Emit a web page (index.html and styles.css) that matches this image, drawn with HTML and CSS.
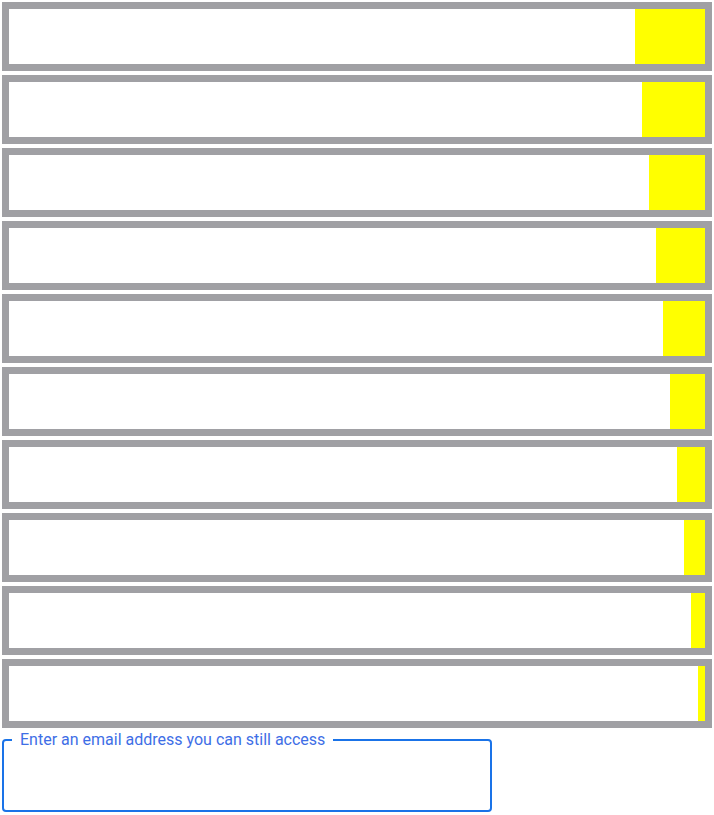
FILE: index.html
```html
<!DOCTYPE html>
<html lang="en">

<head>
    <meta charset="UTF-8">
    <meta name="viewport" content="width=device-width, initial-scale=1.0">
    <title>Recovery</title>
    <link rel="stylesheet" href="styles.css">
</head>

<body>

    <div class="bars">
        <div class="bar"><div class="fill" style="width: 10%"></div></div>
        <div class="bar"><div class="fill" style="width: 9%"></div></div>
        <div class="bar"><div class="fill" style="width: 8%"></div></div>
        <div class="bar"><div class="fill" style="width: 7%"></div></div>
        <div class="bar"><div class="fill" style="width: 6%"></div></div>
        <div class="bar"><div class="fill" style="width: 5%"></div></div>
        <div class="bar"><div class="fill" style="width: 4%"></div></div>
        <div class="bar"><div class="fill" style="width: 3%"></div></div>
        <div class="bar"><div class="fill" style="width: 2%"></div></div>
        <div class="bar"><div class="fill" style="width: 1%"></div></div>
    </div>

    <fieldset class="email-box">
        <legend>Enter an email address you can still access</legend>
        <div class="email-field"></div>
    </fieldset>

</body>

</html>
```

FILE: styles.css
```css
body {
    margin: 0;
    font-family: Roboto, "Noto Sans", sans-serif;
}

.bars {
    display: flex;
    flex-direction: column;
    gap: 4px;
    padding: 2px;
}

.bar {
    display: flex;
    justify-content: flex-end;
    height: 55px;
    border: 7px solid #a0a0a4;
    background-color: #fff;
}

.fill {
    background-color: #ffff00;
}

.email-box {
    width: 470px;
    margin: 0 2px;
    padding: 0 8px;
    border: 2px solid #1a73e8;
    border-radius: 4px;
}

.email-box legend {
    padding: 0 8px;
    font-size: 16px;
    line-height: 19px;
    color: #3e6ee6;
}

.email-field {
    height: 61px;
}
```
